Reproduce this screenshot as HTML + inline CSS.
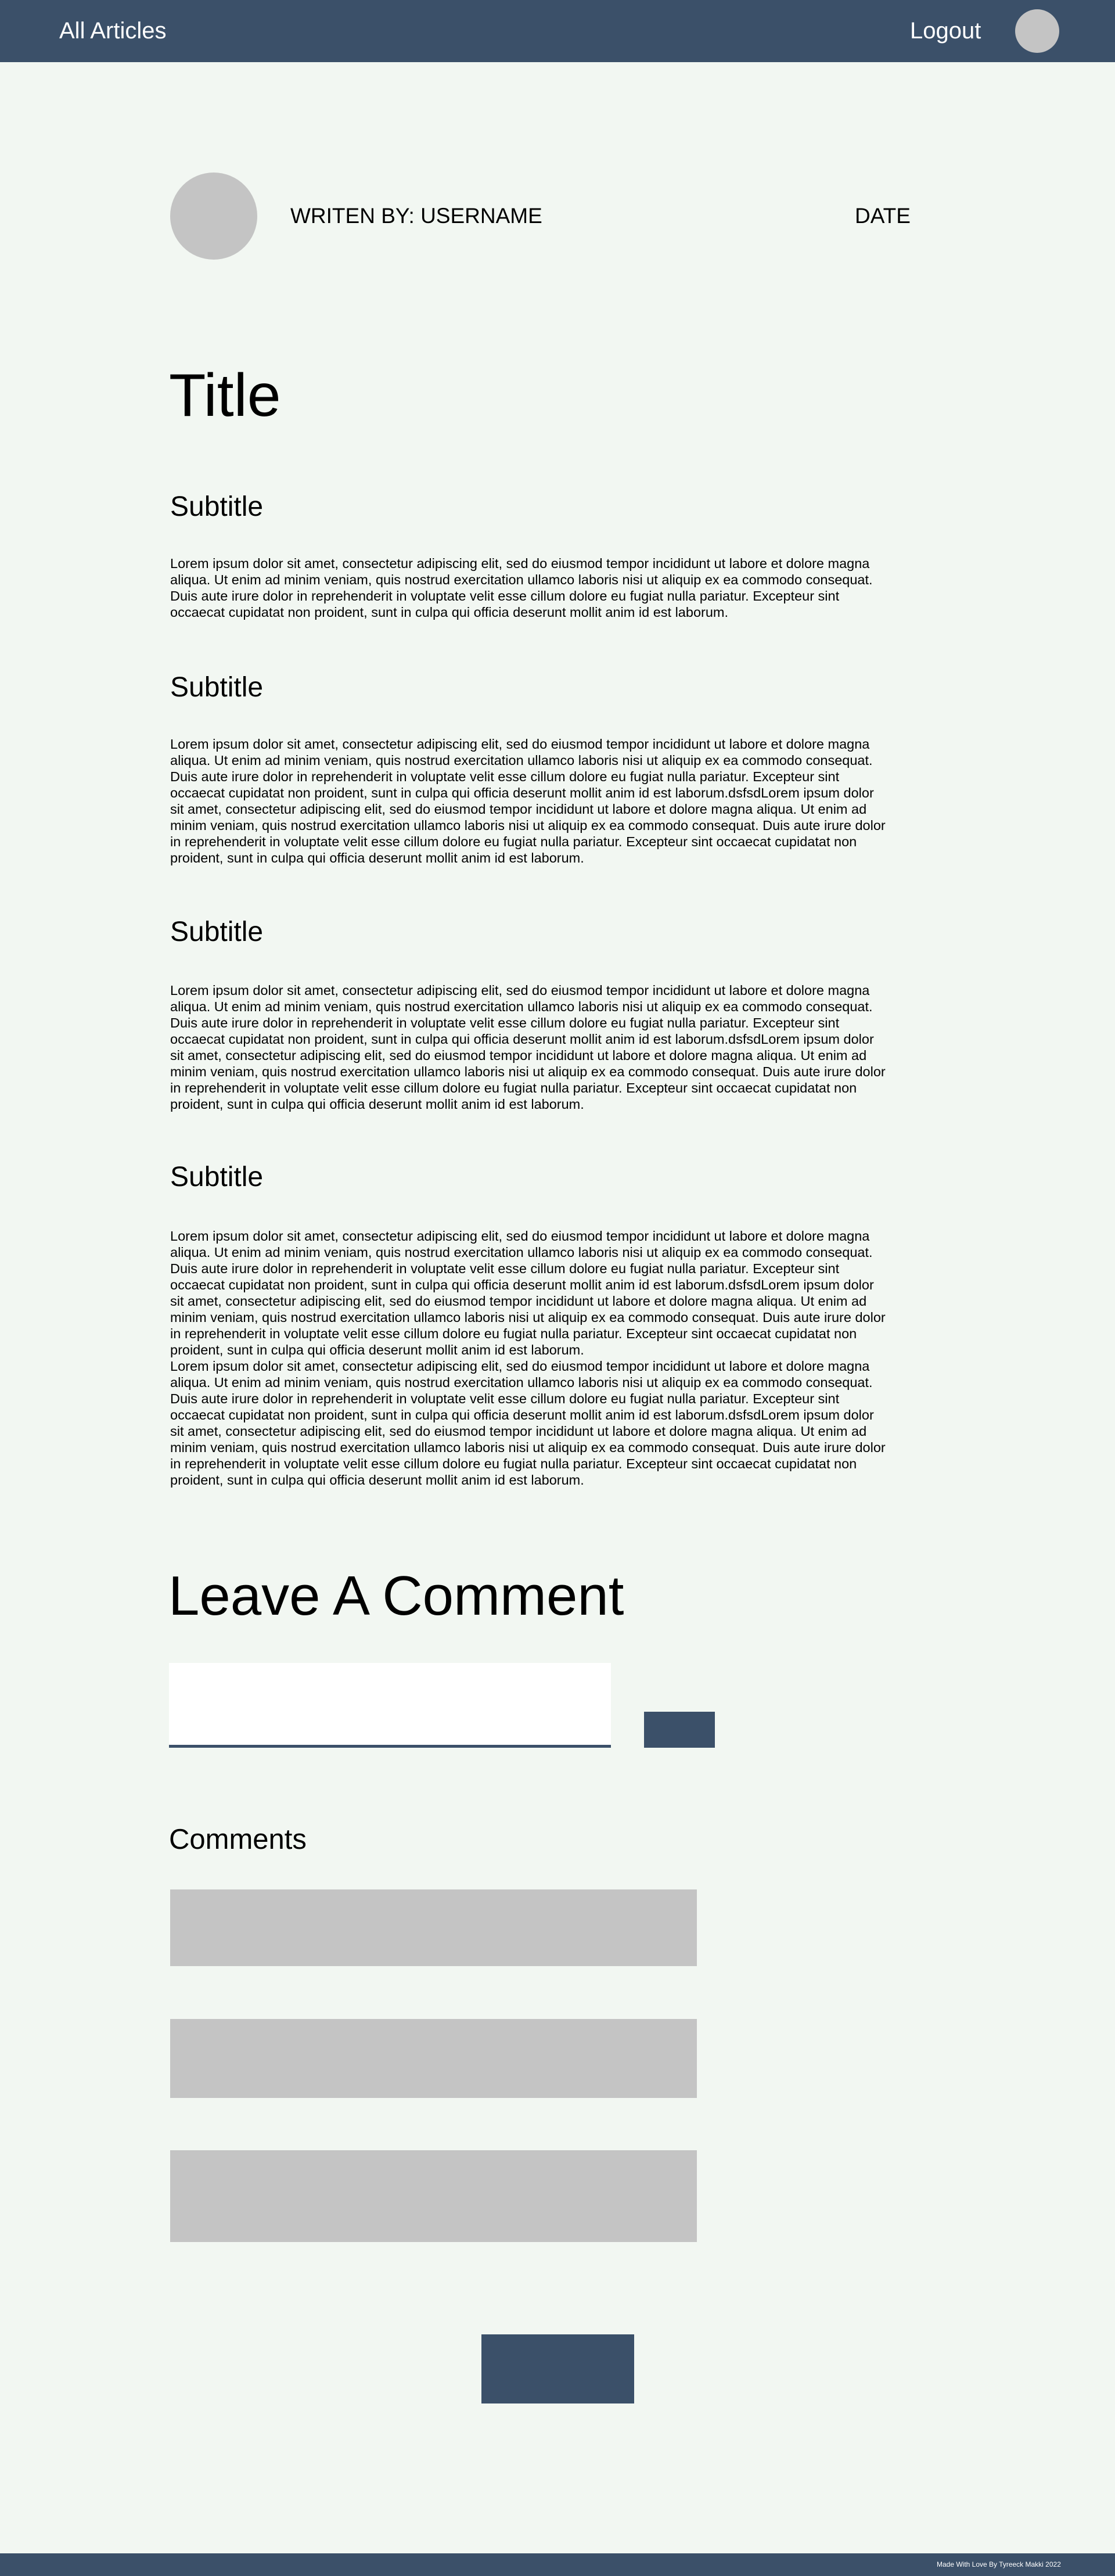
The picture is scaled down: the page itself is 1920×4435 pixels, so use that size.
<!DOCTYPE html>
<html><head><meta charset="utf-8"><style>
*{margin:0;padding:0;box-sizing:border-box}
html,body{width:1920px;height:4435px;background:#f2f7f2;font-family:"Liberation Sans",Arial,sans-serif;color:#000;overflow:hidden}
.a{position:absolute}
.nav{left:0;top:0;width:1920px;height:107px;background:#3b5069}
.nt{color:#fff;font-size:40px;line-height:46px;top:30px}
.circ{border-radius:50%;background:#c4c4c4}
.p{left:293px;font-size:23.5px;line-height:28px;white-space:nowrap}
.sub{left:293px;font-size:48px;line-height:55px}
.box{left:293px;width:907px;background:#c4c4c4}
</style></head><body>
<div class="a nav"></div>
<div class="a nt" style="left:102px">All Articles</div>
<div class="a nt" style="left:1567px">Logout</div>
<div class="a circ" style="left:1748px;top:16px;width:76px;height:75px"></div>

<div class="a circ" style="left:293px;top:297px;width:150px;height:150px"></div>
<div class="a" style="left:500px;top:350px;font-size:37px;line-height:43px">WRITEN BY: USERNAME</div>
<div class="a" style="left:1472px;top:350px;font-size:37px;line-height:43px">DATE</div>

<div class="a" style="left:291px;top:621px;font-size:104px;line-height:120px">Title</div>

<div class="a sub" style="top:845px">Subtitle</div>
<div class="a p" style="top:956px">Lorem ipsum dolor sit amet, consectetur adipiscing elit, sed do eiusmod tempor incididunt ut labore et dolore magna<br>aliqua. Ut enim ad minim veniam, quis nostrud exercitation ullamco laboris nisi ut aliquip ex ea commodo consequat.<br>Duis aute irure dolor in reprehenderit in voluptate velit esse cillum dolore eu fugiat nulla pariatur. Excepteur sint<br>occaecat cupidatat non proident, sunt in culpa qui officia deserunt mollit anim id est laborum.</div>

<div class="a sub" style="top:1156px">Subtitle</div>
<div class="a p" style="top:1267px">Lorem ipsum dolor sit amet, consectetur adipiscing elit, sed do eiusmod tempor incididunt ut labore et dolore magna<br>aliqua. Ut enim ad minim veniam, quis nostrud exercitation ullamco laboris nisi ut aliquip ex ea commodo consequat.<br>Duis aute irure dolor in reprehenderit in voluptate velit esse cillum dolore eu fugiat nulla pariatur. Excepteur sint<br>occaecat cupidatat non proident, sunt in culpa qui officia deserunt mollit anim id est laborum.dsfsdLorem ipsum dolor<br>sit amet, consectetur adipiscing elit, sed do eiusmod tempor incididunt ut labore et dolore magna aliqua. Ut enim ad<br>minim veniam, quis nostrud exercitation ullamco laboris nisi ut aliquip ex ea commodo consequat. Duis aute irure dolor<br>in reprehenderit in voluptate velit esse cillum dolore eu fugiat nulla pariatur. Excepteur sint occaecat cupidatat non<br>proident, sunt in culpa qui officia deserunt mollit anim id est laborum.</div>

<div class="a sub" style="top:1577px">Subtitle</div>
<div class="a p" style="top:1691px">Lorem ipsum dolor sit amet, consectetur adipiscing elit, sed do eiusmod tempor incididunt ut labore et dolore magna<br>aliqua. Ut enim ad minim veniam, quis nostrud exercitation ullamco laboris nisi ut aliquip ex ea commodo consequat.<br>Duis aute irure dolor in reprehenderit in voluptate velit esse cillum dolore eu fugiat nulla pariatur. Excepteur sint<br>occaecat cupidatat non proident, sunt in culpa qui officia deserunt mollit anim id est laborum.dsfsdLorem ipsum dolor<br>sit amet, consectetur adipiscing elit, sed do eiusmod tempor incididunt ut labore et dolore magna aliqua. Ut enim ad<br>minim veniam, quis nostrud exercitation ullamco laboris nisi ut aliquip ex ea commodo consequat. Duis aute irure dolor<br>in reprehenderit in voluptate velit esse cillum dolore eu fugiat nulla pariatur. Excepteur sint occaecat cupidatat non<br>proident, sunt in culpa qui officia deserunt mollit anim id est laborum.</div>

<div class="a sub" style="top:1999px">Subtitle</div>
<div class="a p" style="top:2114px">Lorem ipsum dolor sit amet, consectetur adipiscing elit, sed do eiusmod tempor incididunt ut labore et dolore magna<br>aliqua. Ut enim ad minim veniam, quis nostrud exercitation ullamco laboris nisi ut aliquip ex ea commodo consequat.<br>Duis aute irure dolor in reprehenderit in voluptate velit esse cillum dolore eu fugiat nulla pariatur. Excepteur sint<br>occaecat cupidatat non proident, sunt in culpa qui officia deserunt mollit anim id est laborum.dsfsdLorem ipsum dolor<br>sit amet, consectetur adipiscing elit, sed do eiusmod tempor incididunt ut labore et dolore magna aliqua. Ut enim ad<br>minim veniam, quis nostrud exercitation ullamco laboris nisi ut aliquip ex ea commodo consequat. Duis aute irure dolor<br>in reprehenderit in voluptate velit esse cillum dolore eu fugiat nulla pariatur. Excepteur sint occaecat cupidatat non<br>proident, sunt in culpa qui officia deserunt mollit anim id est laborum.<br>Lorem ipsum dolor sit amet, consectetur adipiscing elit, sed do eiusmod tempor incididunt ut labore et dolore magna<br>aliqua. Ut enim ad minim veniam, quis nostrud exercitation ullamco laboris nisi ut aliquip ex ea commodo consequat.<br>Duis aute irure dolor in reprehenderit in voluptate velit esse cillum dolore eu fugiat nulla pariatur. Excepteur sint<br>occaecat cupidatat non proident, sunt in culpa qui officia deserunt mollit anim id est laborum.dsfsdLorem ipsum dolor<br>sit amet, consectetur adipiscing elit, sed do eiusmod tempor incididunt ut labore et dolore magna aliqua. Ut enim ad<br>minim veniam, quis nostrud exercitation ullamco laboris nisi ut aliquip ex ea commodo consequat. Duis aute irure dolor<br>in reprehenderit in voluptate velit esse cillum dolore eu fugiat nulla pariatur. Excepteur sint occaecat cupidatat non<br>proident, sunt in culpa qui officia deserunt mollit anim id est laborum.</div>

<div class="a" style="left:290px;top:2693px;font-size:96px;line-height:110px;white-space:nowrap">Leave A Comment</div>
<div class="a" style="left:291px;top:2863px;width:761px;height:146px;background:#fff;border-bottom:5px solid #3b5069"></div>
<div class="a" style="left:1109px;top:2947px;width:122px;height:62px;background:#3b5069"></div>

<div class="a" style="left:291px;top:3139px;font-size:49px;line-height:56px">Comments</div>
<div class="a box" style="top:3253px;height:132px"></div>
<div class="a box" style="top:3476px;height:136px"></div>
<div class="a box" style="top:3702px;height:158px"></div>

<div class="a" style="left:829px;top:4019px;width:263px;height:119px;background:#3b5069"></div>

<div class="a" style="left:0;top:4396px;width:1920px;height:39px;background:#3b5069"></div>
<div class="a" style="left:1613px;top:4407px;font-size:12px;line-height:16px;color:#fff;white-space:nowrap">Made With Love By Tyreeck Makki 2022</div>
</body></html>
